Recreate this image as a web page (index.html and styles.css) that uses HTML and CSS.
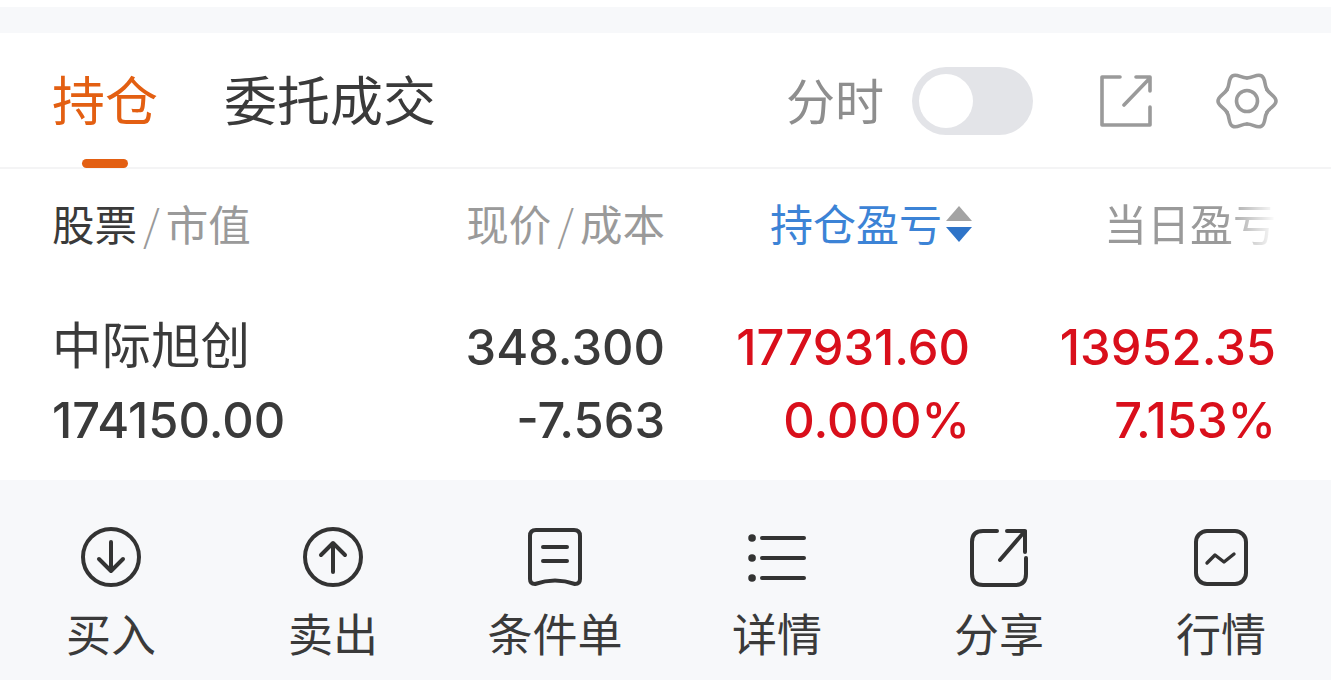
FILE: index.html
```html
<!DOCTYPE html>
<html lang="zh-CN">

<head>
    <meta charset="UTF-8">
    <meta name="viewport" content="width=device-width, initial-scale=1.0">
    <title>持仓</title>
    <link rel="stylesheet" href="styles.css">
</head>

<body>
    <div class="gap"></div>
    <div class="panel">
        <div class="tabs">
            <div class="tabs__left">
                <p class="tab tab--active">持仓</p>
                <p class="tab">委托成交</p>
            </div>
            <div class="tabs__right">
                <p class="timeshare">分时</p>
                <div class="switch"><div class="switch__knob"></div></div>
                <svg class="tool tool--export" viewBox="0 0 52 52">
                    <path d="M20 2H2V50H50V32M24 30L50 3M36 2H50V16" />
                </svg>
                <svg class="tool tool--gear" viewBox="-31 -31 62 62">
                    <path d="M19.9 -11.5C22.9 -6.3 29 -5 29 0C29 5 22.9 6.3 19.9 11.5" />
                    <path d="M19.9 -11.5C22.9 -6.3 29 -5 29 0C29 5 22.9 6.3 19.9 11.5" transform="rotate(60)" />
                    <path d="M19.9 -11.5C22.9 -6.3 29 -5 29 0C29 5 22.9 6.3 19.9 11.5" transform="rotate(120)" />
                    <path d="M19.9 -11.5C22.9 -6.3 29 -5 29 0C29 5 22.9 6.3 19.9 11.5" transform="rotate(180)" />
                    <path d="M19.9 -11.5C22.9 -6.3 29 -5 29 0C29 5 22.9 6.3 19.9 11.5" transform="rotate(240)" />
                    <path d="M19.9 -11.5C22.9 -6.3 29 -5 29 0C29 5 22.9 6.3 19.9 11.5" transform="rotate(300)" />
                    <circle cx="0" cy="0" r="10.5" />
                </svg>
            </div>
        </div>
        <div class="table">
            <div class="table__head">
                <p class="cell"><span class="dark">股票</span><span class="slash">/</span>市值</p>
                <p class="cell cell--right">现价<span class="slash">/</span>成本</p>
                <p class="cell cell--right cell--sorted">持仓盈亏<svg class="sort" viewBox="0 0 26 36">
                        <path class="sort__up" d="M13 0L26 15H0Z" />
                        <path class="sort__down" d="M0 21H26L13 36Z" />
                    </svg></p>
                <p class="cell cell--right cell--last"><span class="fade">当日盈亏</span></p>
            </div>
            <div class="table__row">
                <p class="name">中际旭创</p>
                <p class="num">348.300</p>
                <p class="num num--red">177931.60</p>
                <p class="num num--red">13952.35</p>
                <p class="num num--left">174150.00</p>
                <p class="num">-7.563</p>
                <p class="num num--red">0.000%</p>
                <p class="num num--red">7.153%</p>
            </div>
        </div>
    </div>
    <div class="actions">
        <div class="action">
            <svg class="action__icon" viewBox="0 0 60 60">
                <circle cx="30" cy="30" r="28" />
                <path d="M30 15V43M18 32L30 44L42 32" />
            </svg>
            <p>买入</p>
        </div>
        <div class="action">
            <svg class="action__icon" viewBox="0 0 60 60">
                <circle cx="30" cy="30" r="28" />
                <path d="M30 45V17M18 28L30 16L42 28" />
            </svg>
            <p>卖出</p>
        </div>
        <div class="action">
            <svg class="action__icon" viewBox="0 0 60 60">
                <path d="M11 3H49Q55 3 55 9V52Q55 57 50 57Q30 50 10 57Q5 57 5 52V9Q5 3 11 3Z" />
                <path d="M18 20H42M18 34H42" />
            </svg>
            <p>条件单</p>
        </div>
        <div class="action">
            <svg class="action__icon" viewBox="0 0 60 60">
                <path class="thick" d="M5 11H5.1M5 31H5.1M5 51H5.1" />
                <path d="M15 11H57M15 31H57M15 51H57" />
            </svg>
            <p>详情</p>
        </div>
        <div class="action">
            <svg class="action__icon" viewBox="0 0 60 60">
                <path d="M28 4H14Q3 4 3 15V47Q3 58 14 58H46Q57 58 57 47V31M31 33L56 4M38 4H56V25" />
            </svg>
            <p>分享</p>
        </div>
        <div class="action">
            <svg class="action__icon" viewBox="0 0 60 60">
                <rect x="5" y="4" width="50" height="53" rx="11" />
                <path class="thin" d="M16 36L24 28L33 35L43 27" />
            </svg>
            <p>行情</p>
        </div>
    </div>
</body>

</html>
```

FILE: styles.css
```css
* {
    margin: 0;
    padding: 0;
    box-sizing: border-box;
}

body {
    height: 680px;
    overflow: hidden;
    background-color: #f7f8fa;
    font-family: "Noto Sans CJK SC", "Liberation Sans", sans-serif;
    color: #3a3a3a;
    border-top: 7px solid #fff;
}

.gap {
    height: 26px;
}

.panel {
    height: 447px;
    background-color: #fff;
}

.tabs {
    height: 136px;
    display: flex;
    justify-content: space-between;
    padding: 0 53px 0 52px;
    border-bottom: 2px solid #f4f4f5;
}

.tabs__left {
    display: flex;
    gap: 66px;
}

.tab {
    position: relative;
    height: 134px;
    line-height: 131px;
    font-size: 53px;
}

.tab--active {
    color: #e35f12;
}

.tab--active::after {
    content: "";
    position: absolute;
    left: 30px;
    bottom: -1px;
    width: 46px;
    height: 9px;
    border-radius: 5px;
    background-color: #e35f12;
}

.tabs__right {
    display: flex;
    align-items: center;
    padding-top: 2px;
}

.timeshare {
    font-size: 49px;
    color: #8e8e8e;
    margin-right: 28px;
    margin-bottom: 6px;
}

.switch {
    width: 121px;
    height: 68px;
    border-radius: 34px;
    background-color: #e3e4e8;
    padding: 7px;
    margin-right: 67px;
}

.switch__knob {
    width: 54px;
    height: 54px;
    border-radius: 50%;
    background-color: #fff;
}

.tool {
    fill: none;
    stroke: #9a9a9a;
    stroke-width: 3.6;
    stroke-linejoin: round;
    stroke-linecap: round;
}

.tool--export {
    width: 52px;
    height: 52px;
    margin-right: 64px;
}

.tool--gear {
    width: 62px;
    height: 62px;
}

.table__head,
.table__row {
    display: grid;
    grid-template-columns: 373px 240px 305px 306px;
    padding-left: 52px;
}

.table__head {
    height: 116px;
    padding-bottom: 10px;
    align-items: center;
}

.table__row {
    padding-top: 26px;
    grid-auto-rows: 73px;
    align-items: center;
}

.cell {
    font-size: 42.5px;
    color: #9a9a9a;
    white-space: nowrap;
}

.cell--right {
    text-align: right;
}

.cell--sorted {
    font-size: 43px;
    color: #3c83d6;
}

.cell--last {
    font-size: 43px;
}

.dark {
    color: #3a3a3a;
}

.slash {
    margin: 0 6px;
    font-weight: 300;
}

.fade {
    -webkit-mask-image: linear-gradient(90deg, #000 70%, transparent 100%);
    mask-image: linear-gradient(90deg, #000 70%, transparent 100%);
}

.sort {
    width: 26px;
    height: 36px;
    margin-left: 4px;
    margin-right: -2px;
    vertical-align: -1px;
}

.sort__up {
    fill: #a3a3a3;
}

.sort__down {
    fill: #2f74c8;
}

.name {
    font-size: 49.5px;
    line-height: 1;
    padding-bottom: 10px;
}

.num {
    font-family: "Inter", "Liberation Sans", sans-serif;
    font-size: 48.8px;
    font-weight: 500;
    text-align: right;
}

.num--left {
    text-align: left;
}

.num--red {
    color: #d90f1b;
}

.actions {
    display: grid;
    grid-template-columns: repeat(6, 222px);
}

.action {
    display: flex;
    flex-direction: column;
    align-items: center;
    padding-top: 47px;
    font-size: 45px;
}

.action p {
    line-height: 66px;
    margin-top: 13px;
}

.action__icon {
    width: 60px;
    height: 60px;
    fill: none;
    stroke: #333;
    stroke-width: 4;
    stroke-linecap: round;
    stroke-linejoin: round;
}

.thick {
    stroke-width: 7.5;
}

.thin {
    stroke-width: 3.4;
}
```
